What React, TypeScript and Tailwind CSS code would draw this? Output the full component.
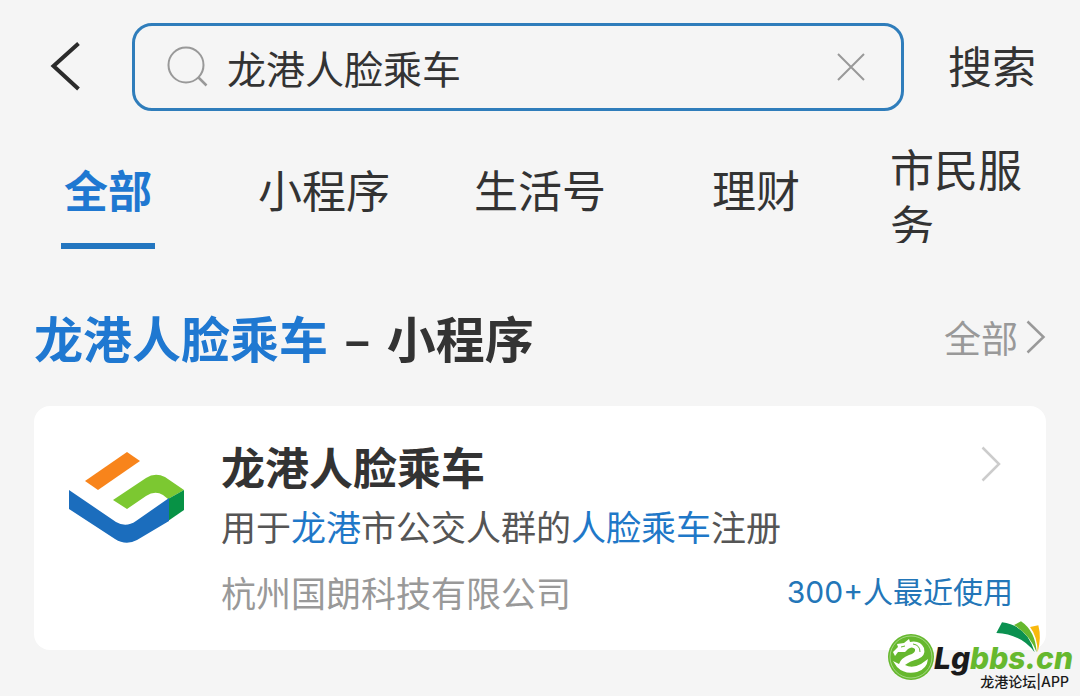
const tabs = ["全部", "小程序", "生活号", "理财"];

function SearchBar() {
  return (
    <header className="flex items-center pt-[23px] pl-[50px] pr-11">
      <button type="button" aria-label="返回" className="shrink-0">
        <svg width="32" height="50" viewBox="0 0 32 50" fill="none">
          <path d="M28.5 1.5L3.5 24L28.5 47" stroke="#2b2b2b" strokeWidth="4" />
        </svg>
      </button>
      <div className="ml-[50px] flex h-[88px] min-w-0 flex-1 items-center rounded-[20px] border-[3px] border-[#2f7dbb] pl-8 pr-9">
        <svg width="42" height="42" viewBox="0 0 42 42" fill="none" stroke="#999999" strokeWidth="2" className="shrink-0">
          <circle cx="19" cy="19" r="17.5" />
          <path d="M31.5 31.5L39.5 39.5" strokeWidth="2.5" />
        </svg>
        <input
          type="text"
          aria-label="搜索内容"
          defaultValue="龙港人脸乘车"
          className="ml-[18px] min-w-0 flex-1 bg-transparent text-[39px] leading-[60px] text-[#333333] outline-none"
        />
        <button type="button" aria-label="清除" className="shrink-0">
          <svg width="28" height="28" viewBox="0 0 28 28" fill="none" stroke="#999999" strokeWidth="2">
            <path d="M1 1L27 27M27 1L1 27" />
          </svg>
        </button>
      </div>
      <button type="button" className="ml-11 shrink-0 pb-1 text-[44px] leading-[60px] text-[#333333]">
        搜索
      </button>
    </header>
  );
}

function Tabs() {
  return (
    <nav className="mt-[29px] grid grid-cols-5 items-start text-[44px] leading-[56px] text-[#333333]">
      {tabs.map((tab, i) => (
        <button
          key={tab}
          type="button"
          className={
            i === 0
              ? "relative flex h-[98px] items-center justify-center font-bold text-[#1f78d1]"
              : "flex h-[98px] items-center justify-center"
          }
        >
          {tab}
          {i === 0 && <span className="absolute -bottom-[11px] h-[6px] w-[94px] bg-[#2376c0]" />}
        </button>
      ))}
      {/* long label wraps onto a second line */}
      <button type="button" className="flex h-[103px] items-start overflow-hidden px-[26px] text-left">
        市民服务
      </button>
    </nav>
  );
}

function AppLogo() {
  return (
    <svg width="116" height="92" viewBox="0 0 116 92" className="mt-4 shrink-0">
      <path d="M58 0L71 9L29 38L16 29Z" fill="#f8841b" />
      <path d="M44 48L77 26Q86 20 96 25L115 38L99 47L94 43Q86 38 77 44L58 57Z" fill="#7cc831" />
      <path d="M115 38V58L99 69V47Z" fill="#079245" />
      <path d="M0 38L47 70Q57 76 67 69L100 46V69L68 88Q57 94 46 87L0 57Z" fill="#1b6dbd" />
    </svg>
  );
}

function Watermark() {
  return (
    <div className="absolute right-[7px] bottom-[6px] flex items-end">
      <svg width="46" height="46" viewBox="0 0 46 46" className="mb-[10px] shrink-0">
        <circle cx="23" cy="23" r="23" fill="#66b82e" />
        <circle cx="23" cy="23" r="21" fill="none" stroke="#a5d884" strokeWidth="1" />
        <path
          d="M5 18L10 13L9 10L16 9L21 5L22 8Q32 6 36 14Q38 22 30 25Q22 27 17 31Q24 35 33 30L40 25Q39 35 29 38Q17 41 9 33L5 27L11 30Q13 24 21 21Q28 19 27 15Q24 12 20 15L17 18L10 18L7 22Z"
          fill="#ffffff"
        />
        <path d="M13 13L17 12M25 10Q32 11 32 18" fill="none" stroke="#66b82e" strokeWidth="1" />
      </svg>
      <svg width="47" height="33" viewBox="195 10 141 99" className="absolute right-[31px] bottom-9">
        <path d="M199 46L216 14Q292 24 314 104Q276 50 199 46Z" fill="#0b9150" />
        <path d="M252 22L273 11Q316 40 320 104Q300 52 252 22Z" fill="#66b82e" />
        <path d="M300 28L325 23Q335 60 323 104Q322 56 300 28Z" fill="#f9b90d" />
      </svg>
      <div className="relative font-['Inter','Noto_Sans_CJK_SC',sans-serif] text-[#1a1a1a]">
        <div className="text-[30px] leading-8 font-extrabold italic">
          Lg<span className="text-[#66b82e]">bbs.cn</span>
        </div>
        <div className="pr-1 text-right text-sm leading-4 font-medium">龙港论坛|APP</div>
      </div>
    </div>
  );
}

export default function App() {
  return (
    <main className="relative min-h-screen bg-[#f5f5f5] font-['Noto_Sans_CJK_SC',sans-serif]">
      <SearchBar />
      <Tabs />

      <section className="px-[34px] pt-[58px]">
        <div className="flex items-center justify-between">
          <h2 className="flex gap-4 text-[49px] leading-[72px] font-bold text-[#333333]">
            <span className="text-[#1f78d1]">龙港人脸乘车</span>
            <span>–</span>
            <span>小程序</span>
          </h2>
          <a href="#all" className="flex items-center text-[37px] leading-[56px] text-[#999999]">
            全部
            <svg width="20" height="34" viewBox="0 0 20 34" fill="none" className="ml-2">
              <path d="M1.5 1.5L17.5 17L1.5 32.5" stroke="#999999" strokeWidth="2.5" />
            </svg>
          </a>
        </div>

        <article className="mt-[33px] flex rounded-2xl bg-white pt-[30px] pr-[33px] pb-7 pl-[35px]">
          <AppLogo />
          <div className="ml-9 min-w-0 flex-1">
            <div className="flex items-center justify-between">
              <h3 className="text-[44px] leading-[60px] font-bold text-[#333333]">龙港人脸乘车</h3>
              <svg width="20" height="36" viewBox="0 0 20 36" fill="none" className="mr-3 mb-1">
                <path d="M1.5 1.5L18 18L1.5 34.5" stroke="#cccccc" strokeWidth="2.5" />
              </svg>
            </div>
            <p className="text-[35px] leading-[60px] text-[#555555]">
              用于<span className="text-[#1f78c8]">龙港</span>市公交人群的
              <span className="text-[#1f78c8]">人脸乘车</span>注册
            </p>
            <div className="mt-[6px] flex items-center justify-between leading-[60px]">
              <span className="text-[35px] text-[#999999]">杭州国朗科技有限公司</span>
              <span className="font-['Inter','Noto_Sans_CJK_SC',sans-serif] text-[30px] text-[#2376b8]">
                300+人最近使用
              </span>
            </div>
          </div>
        </article>
      </section>

      <Watermark />
    </main>
  );
}
